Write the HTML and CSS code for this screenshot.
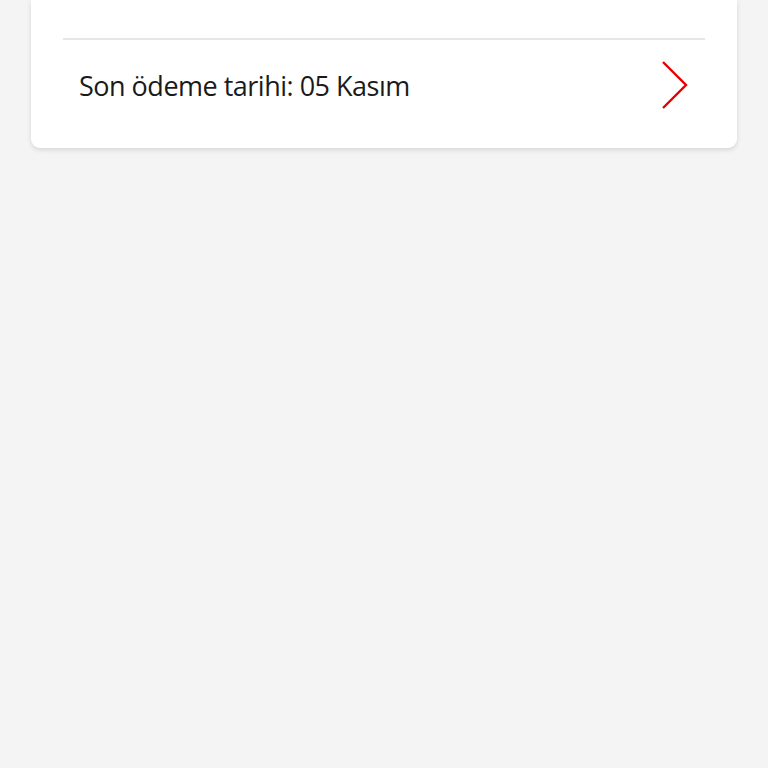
FILE: index.html
```html
<!DOCTYPE html>
<html lang="tr">
<head>
<meta charset="utf-8">
<link rel="stylesheet" href="styles.css">
</head>
<body>
<div class="card">
  <div class="card-top"></div>
  <div class="divider"></div>
  <div class="row">
    <span class="label">Son ödeme tarihi: 05 Kasım</span>
    <svg class="chev" width="28" height="48" viewBox="0 0 28 48"><path d="M2 1 L25 24 L2 47" fill="none" stroke="#e60000" stroke-width="2.4"/></svg>
  </div>
</div>
</body>
</html>
```
FILE: styles.css
```css
html, body { margin: 0; padding: 0; }
body {
  background: #f4f4f4;
  width: 768px;
  height: 768px;
  font-family: "Open Sans", "Noto Sans", sans-serif;
}
.card {
  margin: 0 31px;
  background: #fff;
  border-radius: 0 0 9px 9px;
  box-shadow: 0 2px 5px rgba(0,0,0,0.12);
  padding: 0 32px 0 32px;
}
.card-top { height: 38px; }
.divider { height: 2px; background: #e6e6e6; }
.row {
  display: flex;
  align-items: center;
  justify-content: space-between;
  height: 90px;
  padding: 0 16px 18px 16px;
}
.label {
  font-size: 27px;
  color: #1a1a1a;
  letter-spacing: -0.5px;
}
.chev { display: block; }
```
